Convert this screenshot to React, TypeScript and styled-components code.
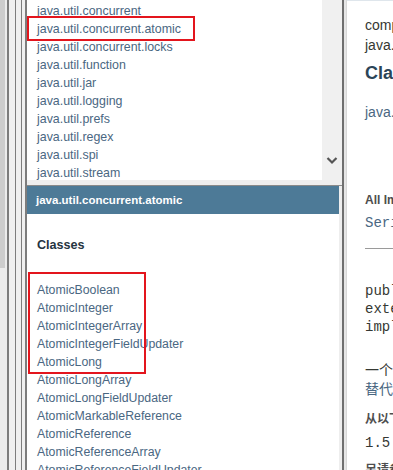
import styled, { createGlobalStyle } from "styled-components";

const GlobalStyle = createGlobalStyle`
  html, body {
    margin: 0;
    padding: 0;
    background: #ffffff;
  }
  body {
    font-family: "Liberation Sans", Arial, "Noto Sans CJK SC", sans-serif;
  }
`;

const packages = [
    "java.util.concurrent",
    "java.util.concurrent.atomic",
    "java.util.concurrent.locks",
    "java.util.function",
    "java.util.jar",
    "java.util.logging",
    "java.util.prefs",
    "java.util.regex",
    "java.util.spi",
    "java.util.stream",
];

const classes = [
    "AtomicBoolean",
    "AtomicInteger",
    "AtomicIntegerArray",
    "AtomicIntegerFieldUpdater",
    "AtomicLong",
    "AtomicLongArray",
    "AtomicLongFieldUpdater",
    "AtomicMarkableReference",
    "AtomicReference",
    "AtomicReferenceArray",
    "AtomicReferenceFieldUpdater",
];

export default function App() {
    return (
        <>
            <GlobalStyle />
            <Page>
                <Gutter>
                    <OuterScroll>
                        <OuterThumb />
                    </OuterScroll>
                    <FrameLine $w={2} />
                    <FramePane $w={6} />
                    <FrameLine $w={1} />
                    <FramePane $w={5} />
                    <FrameLine $w={1} />
                    <FramePane $w={3} />
                    <FrameLine $w={2} />
                </Gutter>

                <NavColumn>
                    <PackageFrame>
                        <PackageList>
                            {packages.map((p) => (
                                <PackageItem key={p}>{p}</PackageItem>
                            ))}
                            <Highlight $top={16} $left={0} $width={168} $height={25} />
                        </PackageList>
                        <FrameScrollbar>
                            <svg width="12" height="9" viewBox="0 0 12 9">
                                <path d="M1.5 2 L6 6.5 L10.5 2" fill="none" stroke="#555" strokeWidth="2.2" />
                            </svg>
                        </FrameScrollbar>
                    </PackageFrame>
                    <FrameSplit />
                    <ClassFrame>
                        <ClassBody>
                            <PackageBar>java.util.concurrent.atomic</PackageBar>
                            <ClassesTitle>Classes</ClassesTitle>
                            <ClassList>
                                {classes.map((c) => (
                                    <ClassItem key={c}>{c}</ClassItem>
                                ))}
                            </ClassList>
                            <Highlight $top={86} $left={1} $width={118} $height={102} />
                        </ClassBody>
                        <FrameEdge />
                    </ClassFrame>
                </NavColumn>

                <Divider />

                <Content>
                    <Profile>compact1, compact2, compact3</Profile>
                    <PkgLabel>java.util.concurrent.atomic</PkgLabel>
                    <Title>Class AtomicLong</Title>
                    <Inheritance>java.lang.Object</Inheritance>
                    <DefTerm $top={70}>All Implemented Interfaces:</DefTerm>
                    <CodeLink>Serializable</CodeLink>
                    <Rule />
                    <Signature>
                        <span>public class AtomicLong</span>
                        <span>extends Number</span>
                        <span>implements Serializable</span>
                    </Signature>
                    <Description>
                        <span>一个可以原子更新的long值。有关原子变量属性的描述，请参阅</span>
                        <LinkLine>替代 java.util.concurrent.atomic 包规范。</LinkLine>
                    </Description>
                    <DefTerm $top={12}>从以下版本开始：</DefTerm>
                    <CodeText>1.5</CodeText>
                    <DefTerm $top={10}>另请参阅：</DefTerm>
                </Content>
            </Page>
        </>
    );
}

const Page = styled.div`
    display: flex;
    width: 393px;
    height: 470px;
    overflow: hidden;
    background: #ffffff;
`;

const Gutter = styled.div`
    display: flex;
    flex-shrink: 0;
    height: 100%;
`;

const OuterScroll = styled.div`
    width: 7px;
    height: 100%;
    background: #ececec;
`;

const OuterThumb = styled.div`
    width: 5px;
    height: 268px;
    background: #cdcdcd;
`;

const FrameLine = styled.div<{ $w: number }>`
    width: ${({ $w }) => $w}px;
    height: 100%;
    background: #7d7d7d;
`;

const FramePane = styled.div<{ $w: number }>`
    width: ${({ $w }) => $w}px;
    height: 100%;
    background: #f0f0f0;
`;

const NavColumn = styled.div`
    display: flex;
    flex-direction: column;
    width: 315px;
    flex-shrink: 0;
    height: 100%;
`;

const PackageFrame = styled.div`
    display: flex;
    height: 180px;
    flex-shrink: 0;
`;

const PackageList = styled.ul`
    position: relative;
    flex: 1;
    margin: 0;
    padding: 2px 0 0 10px;
    list-style: none;
    overflow: hidden;
`;

const PackageItem = styled.li`
    height: 18px;
    line-height: 18px;
    font-size: 12.4px;
    color: #4a6782;
    white-space: nowrap;
`;

const Highlight = styled.div<{ $top: number; $left: number; $width: number; $height: number }>`
    position: absolute;
    top: ${({ $top }) => $top}px;
    left: ${({ $left }) => $left}px;
    width: ${({ $width }) => $width}px;
    height: ${({ $height }) => $height}px;
    box-sizing: border-box;
    border: 2px solid #e3151d;
    pointer-events: none;
`;

const FrameScrollbar = styled.div`
    width: 20px;
    background: #f0f0f0;
    display: flex;
    align-items: flex-end;
    justify-content: center;
    padding-bottom: 15px;
    box-sizing: border-box;
`;

const FrameSplit = styled.div`
    height: 6px;
    flex-shrink: 0;
    background: #eeeeee;
    border-bottom: 1px solid #8a8a8a;
    box-sizing: border-box;
`;

const ClassFrame = styled.div`
    display: flex;
    flex: 1;
`;

const ClassBody = styled.div`
    position: relative;
    flex: 1;
    display: flex;
    flex-direction: column;
`;

const FrameEdge = styled.div`
    width: 3px;
    background: #eeeeee;
`;

const PackageBar = styled.div`
    flex-shrink: 0;
    height: 28px;
    line-height: 28px;
    padding-left: 9px;
    background: #4d7a97;
    color: #ffffff;
    font-weight: bold;
    font-size: 11.5px;
    white-space: nowrap;
`;

const ClassesTitle = styled.div`
    flex-shrink: 0;
    margin-top: 22px;
    padding-left: 10px;
    font-size: 12.6px;
    font-weight: bold;
    color: #253441;
    line-height: 18px;
`;

const ClassList = styled.ul`
    flex-shrink: 0;
    margin: 27px 0 0;
    padding: 0 0 0 10px;
    list-style: none;
`;

const ClassItem = styled.li`
    height: 18px;
    line-height: 18px;
    font-size: 12.3px;
    color: #4a6782;
    white-space: nowrap;
`;

const Divider = styled.div`
    width: 5px;
    flex-shrink: 0;
    height: 100%;
    box-sizing: border-box;
    border-left: 2px solid #6f6f6f;
    background: #e6e6e6;
    border-right: 1px solid #d8d8d8;
`;

const Content = styled.div`
    flex: 1;
    min-width: 0;
    padding: 0 0 0 18px;
    border-top: 1px solid #dfe6ec;
    display: flex;
    flex-direction: column;
    white-space: nowrap;
    overflow: hidden;
    color: #353833;

    & > * {
        flex-shrink: 0;
    }
`;

const Profile = styled.div`
    margin-top: 14px;
    font-size: 14px;
    line-height: 20px;
`;

const PkgLabel = styled.div`
    font-size: 14px;
    line-height: 20px;
`;

const Title = styled.div`
    margin-top: 7px;
    font-size: 18px;
    font-weight: bold;
    color: #2c4557;
    line-height: 22px;
`;

const Inheritance = styled.div`
    margin-top: 18px;
    font-size: 14px;
    line-height: 20px;
    color: #4a6782;
`;

const DefTerm = styled.div<{ $top: number }>`
    margin-top: ${({ $top }) => $top}px;
    font-size: 12px;
    font-weight: bold;
    line-height: 16px;
    color: #4e4e4e;
    font-family: "Liberation Sans", Arial, "Noto Sans CJK SC", sans-serif;
`;

const CodeLink = styled.div`
    margin-top: 6px;
    font-family: "Liberation Mono", "Courier New", monospace;
    font-size: 14px;
    line-height: 18px;
    color: #4a6782;
`;

const Rule = styled.div`
    margin-top: 16px;
    height: 1px;
    background: #9a9a9a;
`;

const Signature = styled.div`
    margin-top: 33px;
    display: flex;
    flex-direction: column;
    font-family: "Liberation Mono", "Courier New", monospace;
    font-size: 14px;
    line-height: 18px;
`;

const Description = styled.div`
    margin-top: 25px;
    display: flex;
    flex-direction: column;
    font-family: "Liberation Sans", "Noto Sans CJK SC", sans-serif;
    font-size: 14px;
    line-height: 19px;
`;

const LinkLine = styled.span`
    color: #4a6782;
`;

const CodeText = styled.div`
    margin-top: 7px;
    font-family: "Liberation Mono", "Courier New", monospace;
    font-size: 14px;
    line-height: 18px;
`;
